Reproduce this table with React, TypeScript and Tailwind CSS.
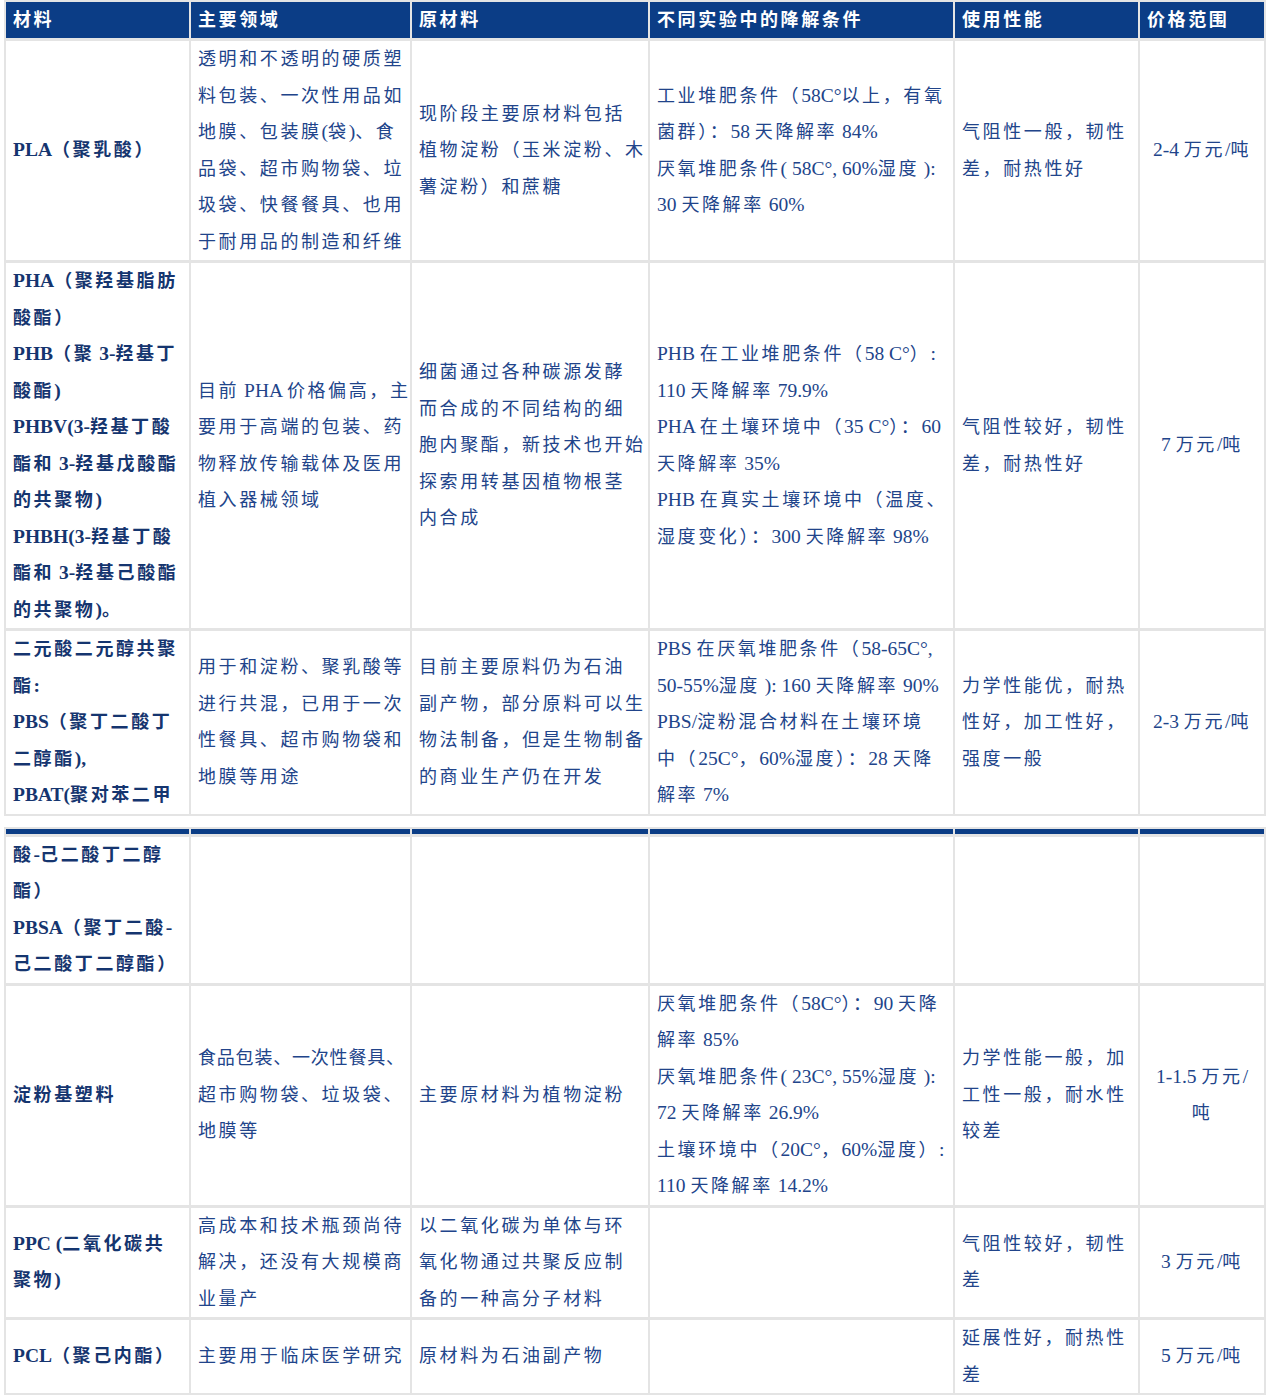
import React from 'react';

// 每个单元格按原图的换行方式写成多行
type Row = string[][];

const headers = ['材料', '主要领域', '原材料', '不同实验中的降解条件', '使用性能', '价格范围'];

const firstPart: Row[] = [
  [
    ['PLA（聚乳酸）'],
    ['透明和不透明的硬质塑', '料包装、一次性用品如', '地膜、包装膜(袋)、食', '品袋、超市购物袋、垃', '圾袋、快餐餐具、也用', '于耐用品的制造和纤维'],
    ['现阶段主要原材料包括', '植物淀粉（玉米淀粉、木', '薯淀粉）和蔗糖'],
    ['工业堆肥条件（58C°以上，有氧', '菌群）：58 天降解率 84%', '厌氧堆肥条件( 58C°, 60%湿度 ):', '30 天降解率 60%'],
    ['气阻性一般，韧性', '差，耐热性好'],
    ['2-4 万元/吨'],
  ],
  [
    ['PHA（聚羟基脂肪', '酸酯）', 'PHB（聚 3-羟基丁', '酸酯)', 'PHBV(3-羟基丁酸', '酯和 3-羟基戊酸酯', '的共聚物)', 'PHBH(3-羟基丁酸', '酯和 3-羟基己酸酯', '的共聚物)。'],
    ['目前 PHA 价格偏高，主', '要用于高端的包装、药', '物释放传输载体及医用', '植入器械领域'],
    ['细菌通过各种碳源发酵', '而合成的不同结构的细', '胞内聚酯，新技术也开始', '探索用转基因植物根茎', '内合成'],
    ['PHB 在工业堆肥条件（58 C°）:', '110 天降解率 79.9%', 'PHA 在土壤环境中（35 C°）：60', '天降解率 35%', 'PHB 在真实土壤环境中（温度、', '湿度变化）：300 天降解率 98%'],
    ['气阻性较好，韧性', '差，耐热性好'],
    ['7 万元/吨'],
  ],
  [
    ['二元酸二元醇共聚', '酯:', 'PBS（聚丁二酸丁', '二醇酯),', 'PBAT(聚对苯二甲'],
    ['用于和淀粉、聚乳酸等', '进行共混，已用于一次', '性餐具、超市购物袋和', '地膜等用途'],
    ['目前主要原料仍为石油', '副产物，部分原料可以生', '物法制备，但是生物制备', '的商业生产仍在开发'],
    ['PBS 在厌氧堆肥条件（58-65C°,', '50-55%湿度 ): 160 天降解率 90%', 'PBS/淀粉混合材料在土壤环境', '中（25C°，60%湿度）：28 天降', '解率 7%'],
    ['力学性能优，耐热', '性好，加工性好，', '强度一般'],
    ['2-3 万元/吨'],
  ],
];

const secondPart: Row[] = [
  [
    ['酸-己二酸丁二醇', '酯）', 'PBSA（聚丁二酸-', '己二酸丁二醇酯）'],
    [],
    [],
    [],
    [],
    [],
  ],
  [
    ['淀粉基塑料'],
    ['食品包装、一次性餐具、', '超市购物袋、垃圾袋、', '地膜等'],
    ['主要原材料为植物淀粉'],
    ['厌氧堆肥条件（58C°）：90 天降', '解率 85%', '厌氧堆肥条件( 23C°, 55%湿度 ):', '72 天降解率 26.9%', '土壤环境中（20C°，60%湿度）:', '110 天降解率 14.2%'],
    ['力学性能一般，加', '工性一般，耐水性', '较差'],
    ['1-1.5 万元/', '吨'],
  ],
  [
    ['PPC (二氧化碳共', '聚物)'],
    ['高成本和技术瓶颈尚待', '解决，还没有大规模商', '业量产'],
    ['以二氧化碳为单体与环', '氧化物通过共聚反应制', '备的一种高分子材料'],
    [],
    ['气阻性较好，韧性', '差'],
    ['3 万元/吨'],
  ],
  [
    ['PCL（聚己内酯）'],
    ['主要用于临床医学研究'],
    ['原材料为石油副产物'],
    [],
    ['延展性好，耐热性', '差'],
    ['5 万元/吨'],
  ],
];

// 原图里这几行的标点被压缩，字距要收一点才放得下
const tightLines = new Set(['食品包装、一次性餐具、']);

// 中文字符加字距，西文和数字保持原样
const cjk = /([\u3000-\u303f\u4e00-\u9fff\uff00-\uffef、]+)/;

function Line({ text }: { text: string }) {
  const parts = text.split(cjk).filter((p) => p !== '');
  const tight = tightLines.has(text);
  return (
    <div>
      {parts.map((p, i) =>
        cjk.test(p) ? (
          <span key={i} className={tight ? 'tracking-[0.8px]' : 'tracking-[2.6px]'}>
            {p}
          </span>
        ) : (
          <span key={i} className="text-[19.5px]">
            {p}
          </span>
        )
      )}
    </div>
  );
}

function Cell({ lines, col }: { lines: string[]; col: number }) {
  const first = col === 0;
  const price = col === 5;
  return (
    <div
      className={
        'bg-white flex flex-col justify-center overflow-hidden whitespace-nowrap leading-[36.5px] text-[18px] px-[7px] ' +
        (first ? 'font-bold text-[#15356f] ' : 'text-[#21448a] ') +
        (price ? 'items-center text-center' : '')
      }
    >
      {lines.map((l, i) => (
        <Line key={i} text={l} />
      ))}
    </div>
  );
}

function Body({ rows }: { rows: Row[] }) {
  return (
    <>
      {rows.map((row, r) =>
        row.map((lines, c) => <Cell key={`${r}-${c}`} lines={lines} col={c} />)
      )}
    </>
  );
}

const gridCls =
  'grid grid-cols-[183px_219px_236px_303px_183px_124px] gap-x-[2px] gap-y-[3px] bg-[#e4e4e4] p-[2px] w-fit';

export default function App() {
  return (
    <div className="bg-white w-[1270px] min-h-[1400px] pl-[4px] font-['Liberation_Serif','Noto_Sans_CJK_SC',serif]">
      {/* 第一部分：带表头 */}
      <div className={gridCls}>
        {headers.map((h) => (
          <div
            key={h}
            className="bg-[#0b3d86] text-white font-bold text-[18px] tracking-[2.6px] h-[36px] leading-[36px] px-[7px] whitespace-nowrap"
          >
            {h}
          </div>
        ))}
        <Body rows={firstPart} />
      </div>

      {/* 第二部分：续表，顶部蓝色细条 */}
      <div className={gridCls + ' mt-[11px]'}>
        {headers.map((h) => (
          <div key={h} className="bg-[#0b3d86] h-[5px]" />
        ))}
        <Body rows={secondPart} />
      </div>
    </div>
  );
}
